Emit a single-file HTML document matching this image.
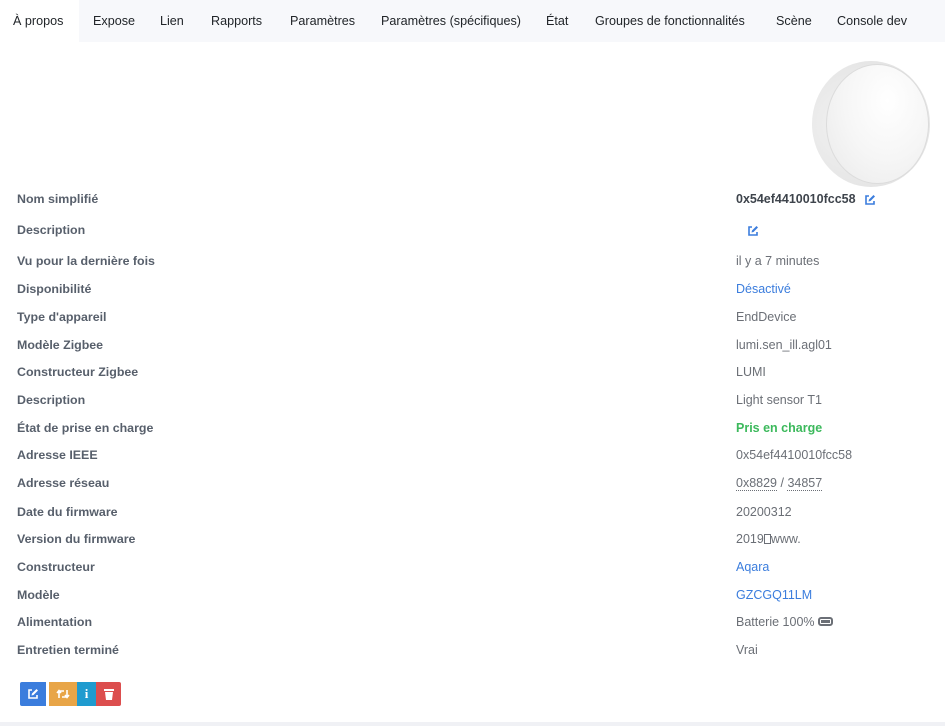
<!DOCTYPE html>
<html><head><meta charset="utf-8">
<style>
*{margin:0;padding:0;box-sizing:border-box}
body{width:945px;height:726px;background:#fff;font-family:"Liberation Sans",sans-serif;position:relative;overflow:hidden}
.tabs{position:absolute;left:0;top:0;width:945px;height:42px;background:#f7f8fb}
.tab{position:absolute;top:14px;font-size:12.6px;color:#212529;white-space:nowrap}
.act{position:absolute;left:0;top:0;width:79px;height:42px;background:#fff}
.l{position:absolute;left:17px;font-size:12.4px;font-weight:bold;color:#575f6b;white-space:nowrap}
.v{position:absolute;left:736px;font-size:12.5px;color:#6b6f76;white-space:nowrap}
.a{color:#3b7ddd}.g{color:#3cb95c;font-weight:bold}
.dot{border-bottom:1px dotted #6b6f76}
.btn{position:absolute;top:682px;height:24px;display:flex;align-items:center;justify-content:center}
.foot{position:absolute;left:0;top:722px;width:945px;height:4px;background:#f0f1f5}
.disk{position:absolute;left:812px;top:61px;width:118px;height:126px;border-radius:50%;background:radial-gradient(ellipse at 40% 50%,#f4f4f4 0%,#e6e6e6 70%,#d4d4d4 100%)}
.disk2{position:absolute;left:826px;top:64px;width:103px;height:120px;border-radius:50%;border:1px solid #dcdcdc;background:radial-gradient(ellipse at 60% 30%,#fff 0%,#f6f6f6 50%,#e9e9e9 100%)}
</style></head><body>
<div class="tabs"><div class="act"></div>
<span class="tab" style="left:13px">À propos</span>
<span class="tab" style="left:93px">Expose</span>
<span class="tab" style="left:160px">Lien</span>
<span class="tab" style="left:211px">Rapports</span>
<span class="tab" style="left:290px">Paramètres</span>
<span class="tab" style="left:381px">Paramètres (spécifiques)</span>
<span class="tab" style="left:546px">État</span>
<span class="tab" style="left:595px">Groupes de fonctionnalités</span>
<span class="tab" style="left:776px">Scène</span>
<span class="tab" style="left:837px">Console dev</span>
</div>
<div class="disk"></div><div class="disk2"></div>

<span class="l" style="top:192px">Nom simplifié</span>
<span class="v" style="top:192px;font-weight:bold;color:#3e444c">0x54ef4410010fcc58</span>
<svg style="position:absolute;left:864px;top:194px" width="12" height="12" viewBox="0 0 12 12"><path d="M5 2H2v8h8V7" fill="none" stroke="#3b7ddd" stroke-width="1.6"/><path d="M4.5 7.5l.5-2L9.5 1l1.5 1.5L6.5 7z" fill="#3b7ddd"/></svg>
<span class="l" style="top:223px">Description</span>
<svg style="position:absolute;left:747px;top:225px" width="12" height="12" viewBox="0 0 12 12"><path d="M5 2H2v8h8V7" fill="none" stroke="#3b7ddd" stroke-width="1.6"/><path d="M4.5 7.5l.5-2L9.5 1l1.5 1.5L6.5 7z" fill="#3b7ddd"/></svg>
<span class="l" style="top:254px">Vu pour la dernière fois</span><span class="v" style="top:254px">il y a 7 minutes</span>
<span class="l" style="top:282px">Disponibilité</span><span class="v a" style="top:282px">Désactivé</span>
<span class="l" style="top:310px">Type d'appareil</span><span class="v" style="top:310px">EndDevice</span>
<span class="l" style="top:338px">Modèle Zigbee</span><span class="v" style="top:338px">lumi.sen_ill.agl01</span>
<span class="l" style="top:365px">Constructeur Zigbee</span><span class="v" style="top:365px">LUMI</span>
<span class="l" style="top:393px">Description</span><span class="v" style="top:393px">Light sensor T1</span>
<span class="l" style="top:421px">État de prise en charge</span><span class="v g" style="top:421px">Pris en charge</span>
<span class="l" style="top:448px">Adresse IEEE</span><span class="v" style="top:448px">0x54ef4410010fcc58</span>
<span class="l" style="top:476px">Adresse réseau</span><span class="v" style="top:476px"><span class="dot">0x8829</span> / <span class="dot">34857</span></span>
<span class="l" style="top:505px">Date du firmware</span><span class="v" style="top:505px">20200312</span>
<span class="l" style="top:532px">Version du firmware</span><span class="v" style="top:532px">2019<span style="display:inline-block;width:7px;height:10px;border:1px solid #6b6f76;vertical-align:-1px"></span>www.</span>
<span class="l" style="top:560px">Constructeur</span><span class="v a" style="top:560px">Aqara</span>
<span class="l" style="top:588px">Modèle</span><span class="v a" style="top:588px">GZCGQ11LM</span>
<span class="l" style="top:615px">Alimentation</span><span class="v" style="top:615px">Batterie 100% <span style="display:inline-block;width:15px;height:9px;border:2px solid #6b6f76;border-radius:3px;background:#fff;vertical-align:0px;position:relative"><span style="position:absolute;left:1px;top:1px;right:1px;bottom:1px;background:#6b6f76"></span></span></span>
<span class="l" style="top:643px">Entretien terminé</span><span class="v" style="top:643px">Vrai</span>

<div class="btn" style="left:20px;width:26px;background:#3b7ddd;border-radius:2px 0 0 2px"><svg width="12" height="12" viewBox="0 0 12 12"><path d="M5 2H2v8h8V7" fill="none" stroke="#fff" stroke-width="1.6"/><path d="M4.5 7.5l.5-2L9.5 1l1.5 1.5L6.5 7z" fill="#fff"/></svg></div>
<div class="btn" style="left:49px;width:28px;background:#e8a547"><svg width="14" height="12" viewBox="0 0 14 12"><path d="M3 10V3h5M1 5l2-2.5L5 5M11 2v7H6M9 7l2 2.5L13 7" fill="none" stroke="#fff" stroke-width="1.6"/></svg></div>
<div class="btn" style="left:77px;width:19px;background:#1f9bcf;color:#fff;font-weight:bold;font-size:13px;font-family:'Liberation Serif',serif">i</div>
<div class="btn" style="left:96px;width:25px;background:#dc4e4e;border-radius:0 2px 2px 0"><svg width="10" height="12" viewBox="0 0 10 12"><rect x="0" y="1" width="10" height="2" fill="#fff"/><path d="M1 4h8l-1 8H2z" fill="#fff"/></svg></div>
<div class="foot"></div>
</body></html>
